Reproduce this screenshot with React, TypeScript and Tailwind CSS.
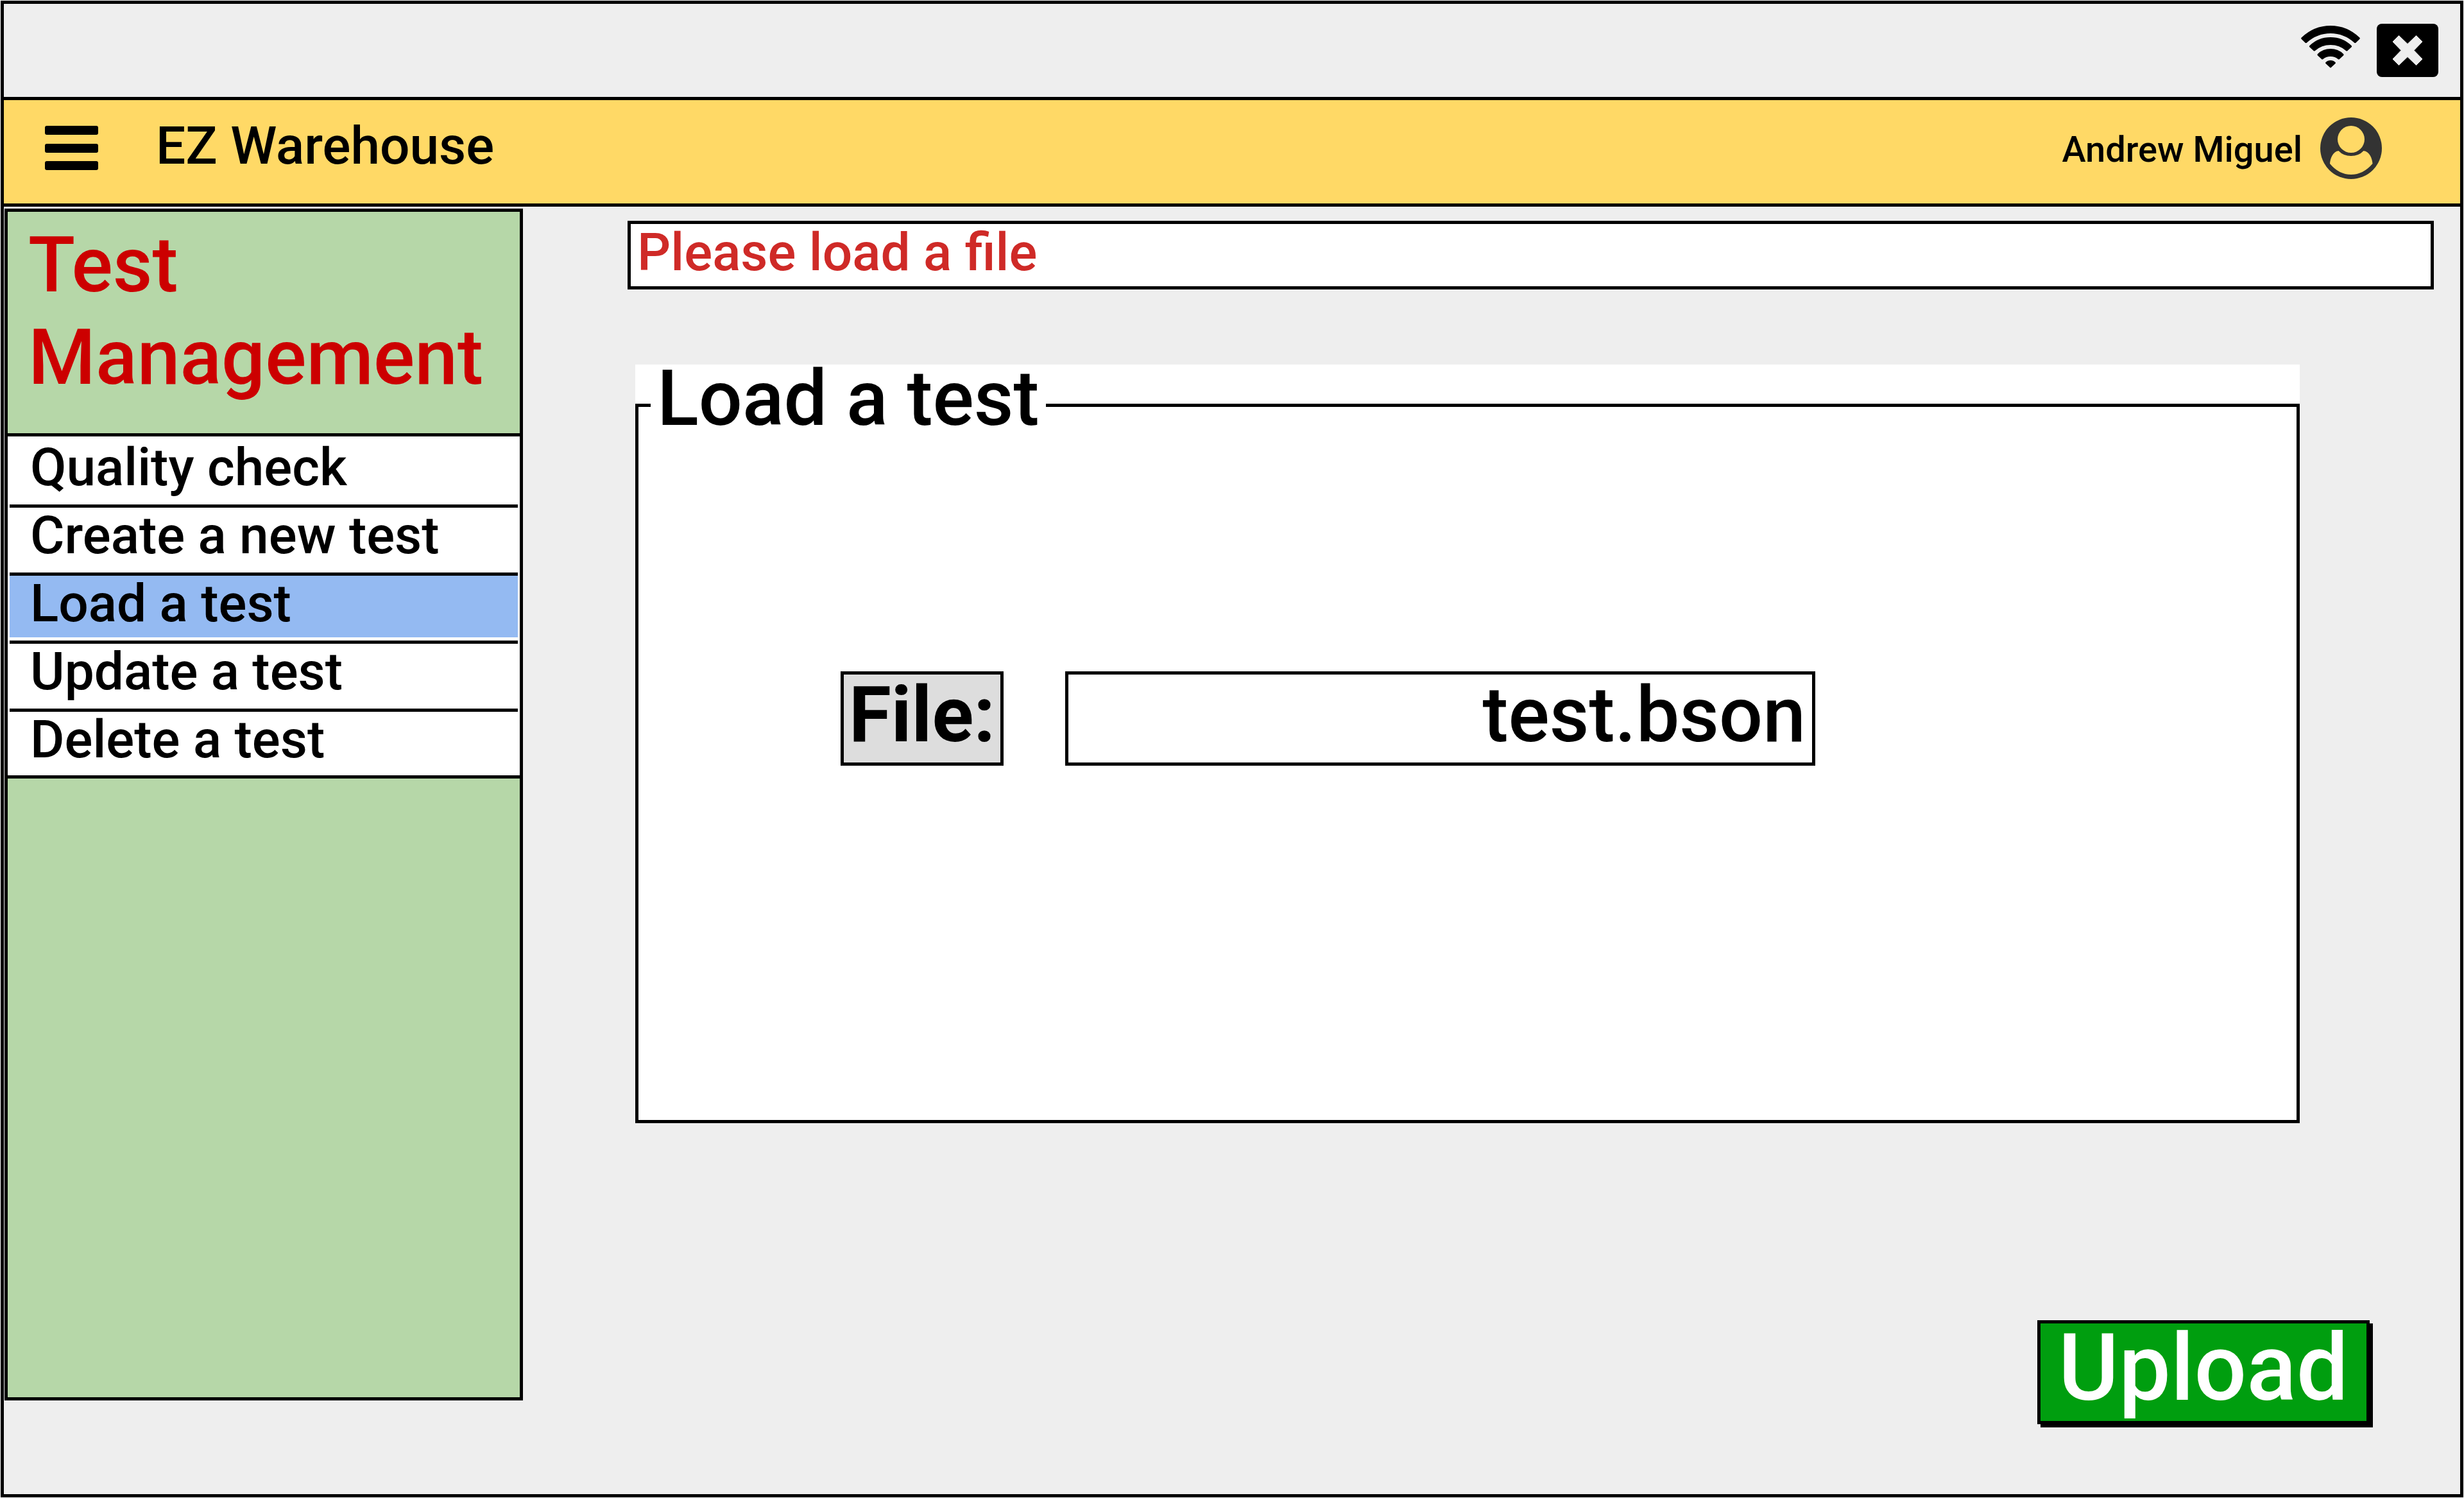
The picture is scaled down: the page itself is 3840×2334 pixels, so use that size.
const menuItems = [
  'Quality check',
  'Create a new test',
  'Load a test',
  'Update a test',
  'Delete a test',
];

function WifiIcon() {
  return (
    <svg viewBox="0 -3 92 72" className="h-[72px] w-[92px]" role="img" aria-label="Wi-Fi">
      <path d="M9 26.500Q7.500 27.500 6.500 26.500L.8 21Q-.5 19.500 .8 18.500Q20 0 46 0T91.200 18.500Q92.500 19.500 91.200 21L85.500 26.500Q84.500 27.500 83 26.500Q67 12 46 12T9 26.500Z" />
      <path d="M22 39Q20.500 40 19.500 39L13.500 33.500Q12 32 13.500 31Q27 18 46 18T78.500 31Q80 32 78.500 33.500L72.500 39Q71.500 40 70 39Q60 30 46 30T22 39Z" />
      <path d="M34.500 52Q33 53 32 52L26 46.500Q24.500 45 26 44Q34 36 46 36T66 44Q67.500 45 66 46.500L60 52Q59 53 57.500 52Q53 48 46 48T34.500 52Z" />
      <path d="M47 65Q46 66 45 65L38.500 59Q37.500 57.800 38.500 57Q41.500 54 46 54T53.500 57Q54.500 57.800 53.500 59Z" />
    </svg>
  );
}

function CloseIcon() {
  return (
    <svg viewBox="0 0 96 83" className="h-[83px] w-[96px]" aria-hidden="true">
      <rect width="96" height="83" rx="8" />
      <path
        d="M34.500 18.500 48 31.500 61.500 18.500 71 28 58 41.500 71 55 61.500 64.500 48 51.500 34.500 64.500 25 55 38 41.500 25 28Z"
        fill="#eee"
        stroke="#eee"
        strokeWidth="1"
        strokeLinejoin="round"
      />
    </svg>
  );
}

function MenuIcon() {
  return (
    <svg viewBox="0 0 83 69" className="h-[69px] w-[83px]" aria-hidden="true">
      <rect width="83" height="14" rx="3" />
      <rect y="28" width="83" height="14" rx="3" />
      <rect y="55" width="83" height="14" rx="3" />
    </svg>
  );
}

function AvatarIcon() {
  return (
    <svg viewBox="0 0 96 96" className="h-24 w-24" aria-hidden="true">
      <circle cx="48" cy="48" r="48" fill="#333" />
      <circle cx="48" cy="34" r="21" fill="#ffd966" />
      <path
        d="M28.500 52Q36 60 48 60T67.500 52C77 53 81 64 81.500 72Q67 89 48 89T15 72C15.500 64 19.500 53 28.500 52Z"
        fill="#ffd966"
      />
    </svg>
  );
}

export default function App() {
  return (
    <div className="flex min-h-screen bg-white p-px font-['Roboto','Liberation_Sans',sans-serif] font-medium text-black">
      <div className="flex min-w-0 flex-1 flex-col border-[5px] border-black bg-[#eeeeee]">
        <div className="flex items-start justify-end gap-[26px] pt-[31px] pr-[34px] pb-[31px]">
          <WifiIcon />
          <button type="button" aria-label="Close">
            <CloseIcon />
          </button>
        </div>

        <header className="flex h-[171px] items-center justify-between border-y-[5px] border-black bg-[#ffd966] pr-[122px] pb-3 pl-16">
          <div className="flex items-center gap-[90px]">
            <button type="button" aria-label="Menu">
              <MenuIcon />
            </button>
            <h1 className="pb-2 text-[82px] leading-[96px]">EZ Warehouse</h1>
          </div>
          <button type="button" className="flex items-center gap-7">
            <span className="pt-1 text-[56px] leading-[64px]">Andrew Miguel</span>
            <AvatarIcon />
          </button>
        </header>

        <div className="flex flex-1">
          <aside className="mt-[3px] mb-[146px] ml-px w-[808px] shrink-0 border-[5px] border-black bg-[#b6d7a8]">
            <h2 className="px-8 pt-[11px] pb-[46px] text-[120px] leading-[144px] text-[#cc0000]">
              Test Management
            </h2>
            <nav className="-mx-[5px] border-[5px] border-black bg-white pt-[5px]">
              <ul className="px-[3px]">
                {menuItems.map((item) => (
                  <li
                    key={item}
                    className="border-b-[5px] border-black pb-[5px] last:border-0 last:pb-[3px]"
                  >
                    <button
                      type="button"
                      aria-current={item === 'Load a test' ? 'page' : undefined}
                      className="w-full pb-[10px] pl-8 text-left text-[82px] leading-[86px] aria-[current=page]:bg-[#94baf2]"
                    >
                      {item}
                    </button>
                  </li>
                ))}
              </ul>
            </nav>
          </aside>

          <main className="flex min-w-0 flex-1 flex-col pt-[22px] pr-[41px] pb-[109px] pl-[163px]">
            <p
              role="alert"
              className="border-[5px] border-black bg-white px-[10px] pt-px pb-[10px] text-[82px] leading-[86px] text-[#cf2a27]"
            >
              Please load a file
            </p>

            <div className="mt-[117px] mr-[209px] ml-3 bg-white">
              <fieldset className="min-w-0 border-[5px] border-black pr-[750px] pb-[552px] pl-[19px]">
                <legend className="px-[10px] pb-[21px] text-[120px] leading-[106px]">Load a test</legend>
                <div className="flex gap-24 pt-[351px] pl-[296px]">
                  <label
                    htmlFor="file-name"
                    className="border-[5px] border-black bg-[#dddddd] px-2 pb-[11px] text-[120px] leading-[126px] font-bold"
                  >
                    File:
                  </label>
                  <input
                    id="file-name"
                    type="text"
                    defaultValue="test.bson"
                    className="w-0 min-w-0 flex-1 border-[5px] border-black bg-white px-[10px] pb-[11px] text-right text-[120px] leading-[126px]"
                  />
                </div>
              </fieldset>
            </div>

            <button
              type="button"
              className="mt-auto mr-[100px] self-end border-[5px] border-black bg-[#009e0f] px-7 pb-3 text-[144px] leading-[140px] text-white shadow-[5px_5px_0_#000]"
            >
              Upload
            </button>
          </main>
        </div>
      </div>
    </div>
  );
}
